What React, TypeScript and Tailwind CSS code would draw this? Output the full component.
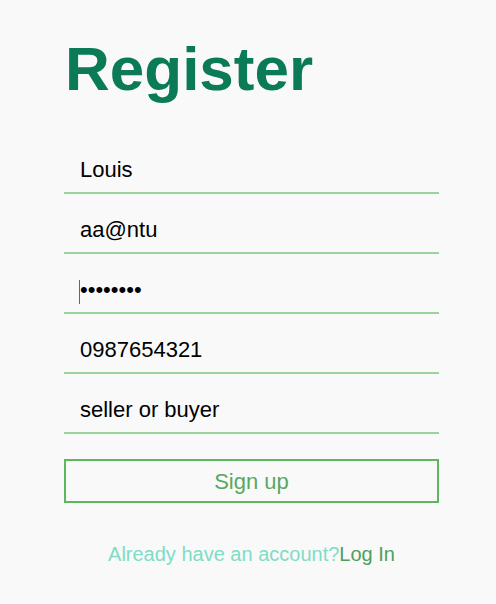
import React from "react";

function Field({ value, type = "text", caret = false }: { value: string; type?: string; caret?: boolean }) {
  return (
    <div className="mt-[12px]">
      <div className="relative h-[46px]">
        <input
          className="block w-full h-full pl-[16px] pt-[2px] bg-transparent outline-none text-[22px] text-black font-['Liberation_Sans',Arial,sans-serif]"
          type={type}
          readOnly
          value={value}
        />
        {caret && <span className="absolute left-[15px] top-[14px] w-[1px] h-[24px] bg-[#666]" />}
      </div>
      <div className="h-[2px] bg-[#9bd39d]" />
    </div>
  );
}

export default function App() {
  return (
    <div className="min-h-[604px] w-[496px] bg-[#f9f9f9] font-['Liberation_Sans',Arial,sans-serif]">
      <div className="pl-[64px] pr-[57px] pt-[33px]">
        <h1 className="text-[62px] leading-[71px] font-bold text-[#0b7a57] pl-[1px]">Register</h1>
        <div className="mt-[42px]">
          <Field value="Louis" />
          <Field value="aa@ntu" />
          <Field value="12345678" type="password" caret />
          <Field value="0987654321" />
          <Field value="seller or buyer" />
        </div>
        <button className="mt-[25px] w-full h-[44px] border-2 border-[#5cb85c] bg-transparent text-[22px] text-[#58a862] flex items-center justify-center">
          Sign up
        </button>
        <p className="mt-[39px] text-center text-[20px] leading-[24px]">
          <span className="text-[#80dcc6]">Already have an account?</span>
          <span className="text-[#4f9f5d]">Log In</span>
        </p>
      </div>
    </div>
  );
}
